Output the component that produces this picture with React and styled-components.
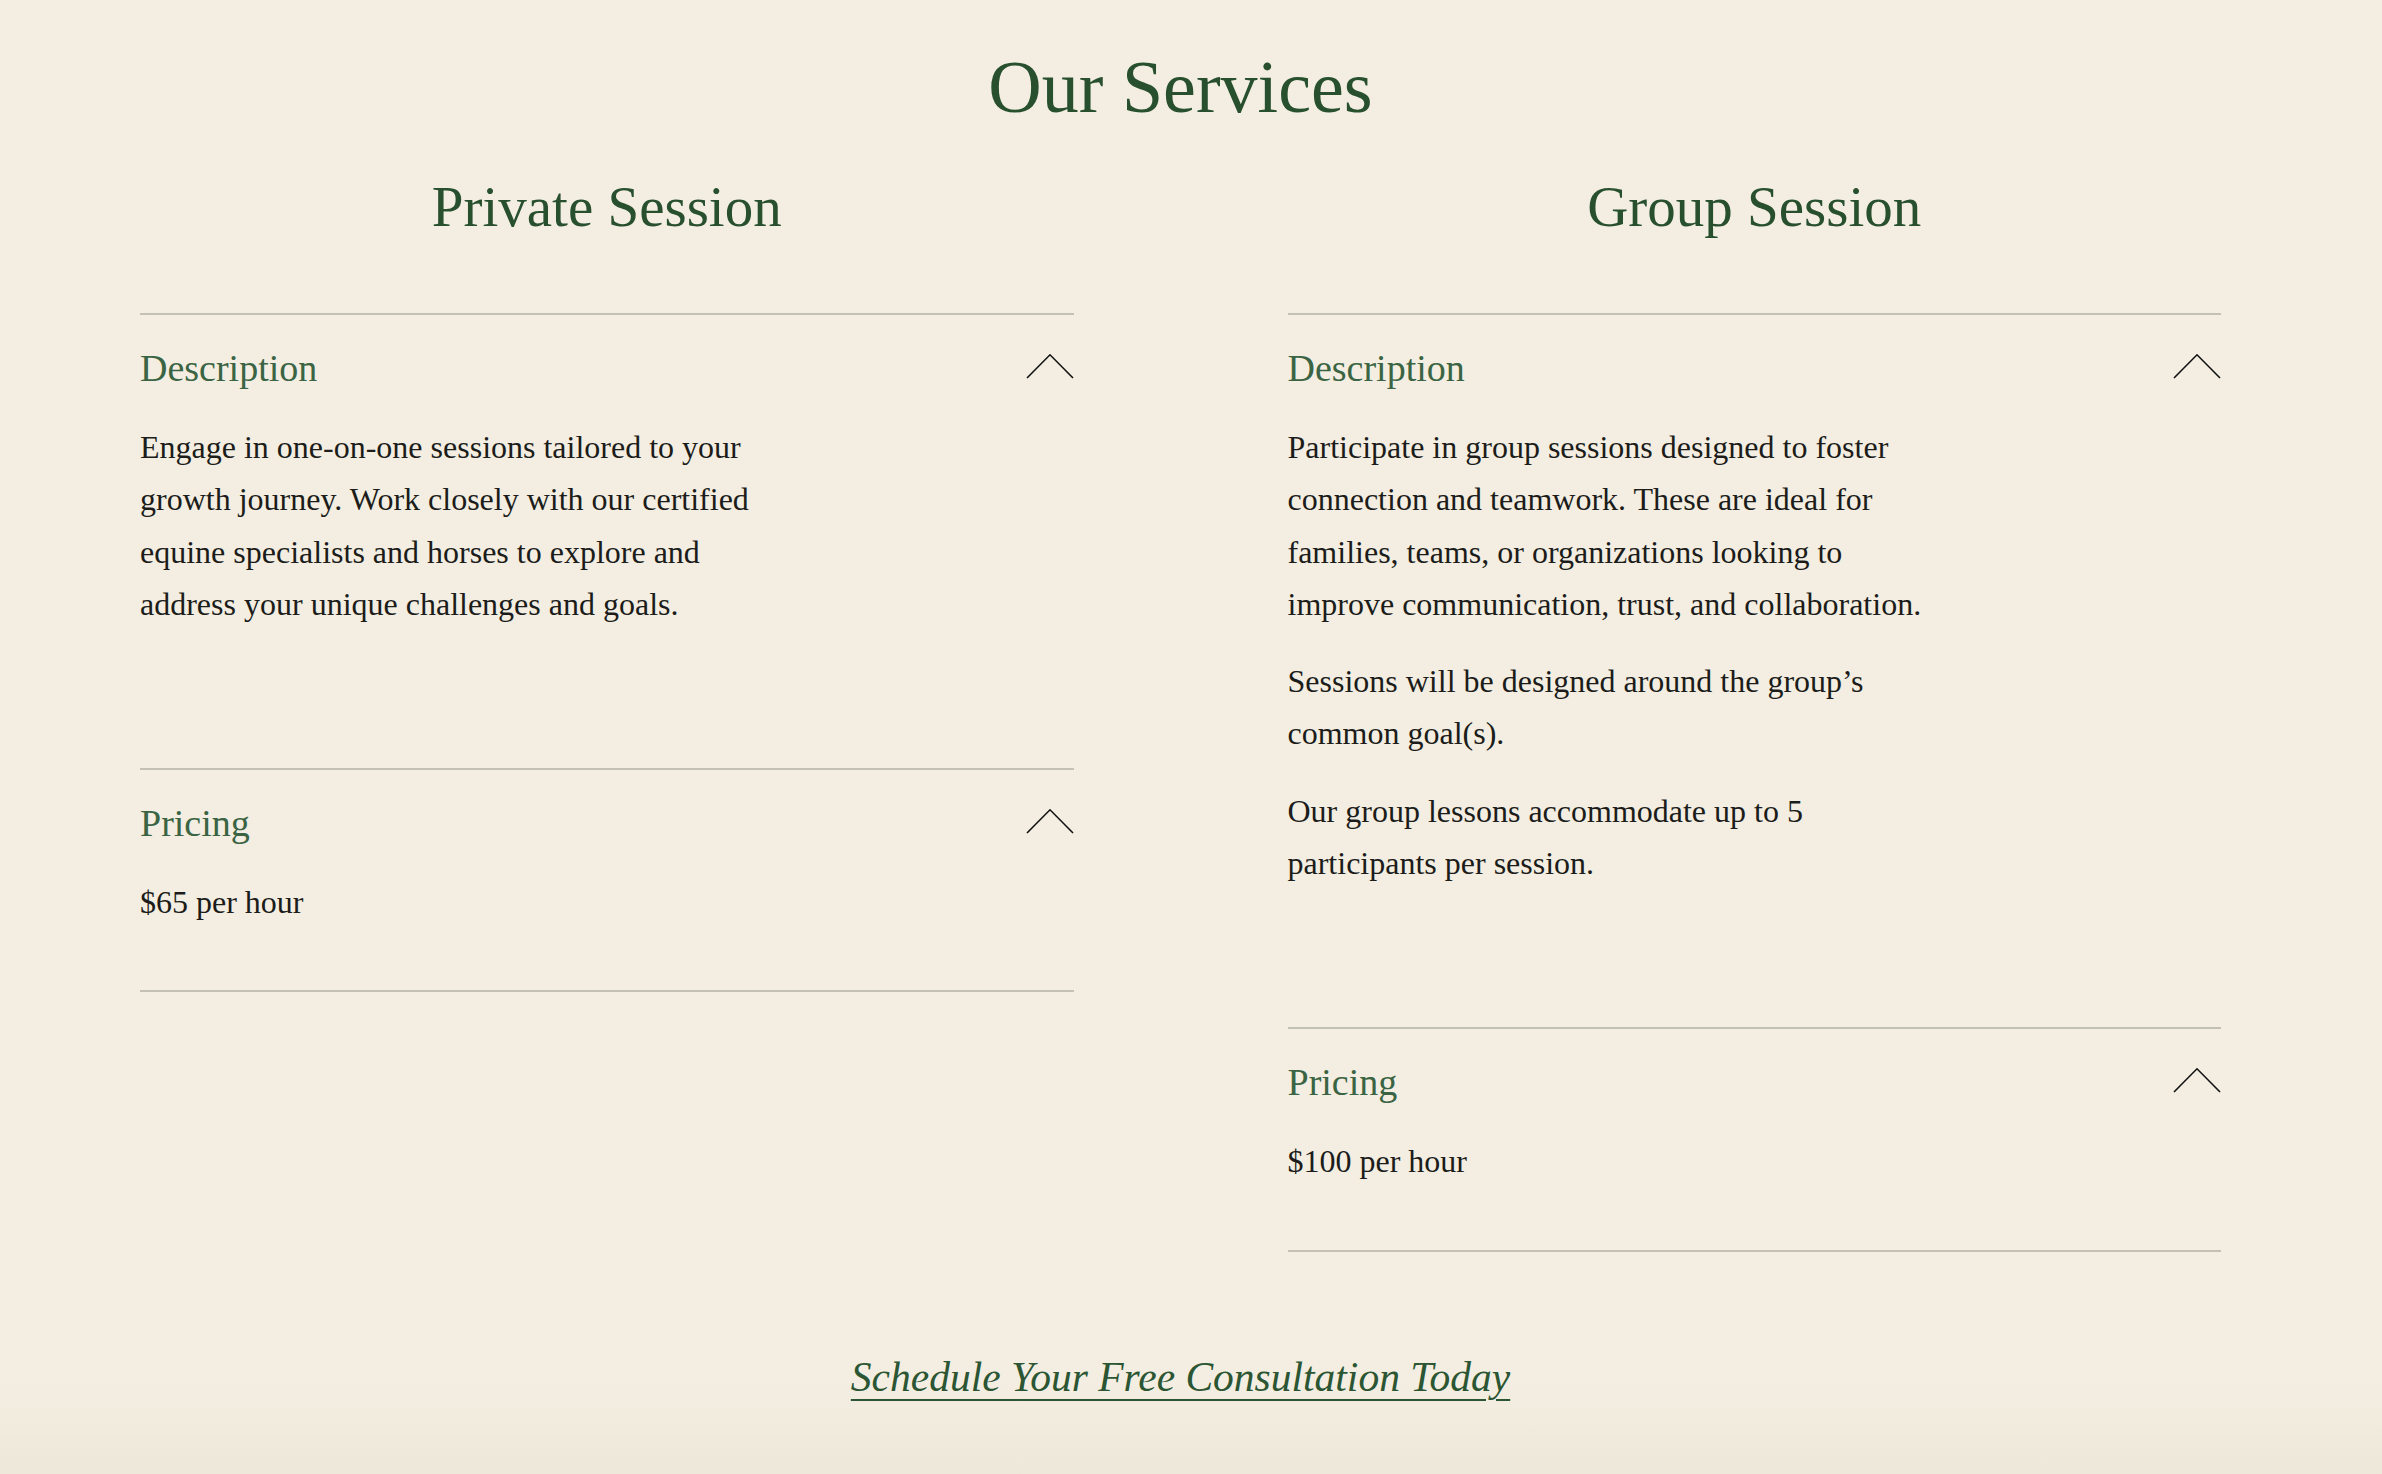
import React from "react";
import styled, { createGlobalStyle } from "styled-components";

const GlobalStyle = createGlobalStyle`
  html, body {
    margin: 0;
    padding: 0;
    background: #f3eee1;
  }
  body {
    font-family: "Liberation Serif", "Times New Roman", serif;
    color: #1c1c1a;
  }
`;

const services = [
  {
    title: "Private Session",
    description: [
      "Engage in one-on-one sessions tailored to your growth journey. Work closely with our certified equine specialists and horses to explore and address your unique challenges and goals.",
    ],
    price: "$65 per hour",
  },
  {
    title: "Group Session",
    description: [
      "Participate in group sessions designed to foster connection and teamwork. These are ideal for families, teams, or organizations looking to improve communication, trust, and collaboration.",
      "Sessions will be designed around the group\u2019s common goal(s).",
      "Our group lessons accommodate up to 5 participants per session.",
    ],
    price: "$100 per hour",
  },
];

const Chevron = () => (
  <ChevronSvg viewBox="0 0 48 26" width="48" height="26">
    <polyline
      points="1,25 24,1.8 47,25"
      fill="none"
      stroke="#111"
      strokeWidth="1.6"
    />
  </ChevronSvg>
);

const AccordionItem = ({ label, children, last, bottomPad }) => (
  <Item $last={last}>
    <ItemHeader>
      <ItemLabel>{label}</ItemLabel>
      <Chevron />
    </ItemHeader>
    <ItemBody $pad={bottomPad}>{children}</ItemBody>
  </Item>
);

const App = () => {
  return (
    <>
      <GlobalStyle />
      <Page>
        <Title>Our Services</Title>
        <Columns>
          {services.map((s) => (
            <Column key={s.title}>
              <ColumnTitle>{s.title}</ColumnTitle>
              <AccordionItem label="Description" bottomPad={138}>
                {s.description.map((p, i) => (
                  <Paragraph key={i}>{p}</Paragraph>
                ))}
              </AccordionItem>
              <AccordionItem label="Pricing" bottomPad={62} last>
                <Paragraph>{s.price}</Paragraph>
              </AccordionItem>
            </Column>
          ))}
        </Columns>
        <CtaRow>
          <CtaLink href="#">Schedule Your Free Consultation Today</CtaLink>
        </CtaRow>
      </Page>
      <BottomShade />
    </>
  );
};

export default App;

const Page = styled.main`
  min-height: 100vh;
  box-sizing: border-box;
  padding: 43px 161px 60px 140px;
  display: flex;
  flex-direction: column;
`;

const Title = styled.h1`
  margin: 0;
  font-weight: 400;
  font-size: 74px;
  line-height: 89px;
  text-align: center;
  color: #28502f;
`;

const Columns = styled.div`
  display: grid;
  grid-template-columns: 1fr 1fr;
  column-gap: 214px;
  align-items: start;
  margin-top: 41px;
`;

const Column = styled.section`
  display: flex;
  flex-direction: column;
`;

const ColumnTitle = styled.h2`
  margin: 0 0 72px;
  font-weight: 400;
  font-size: 57px;
  line-height: 68px;
  text-align: center;
  color: #28502f;
`;

const Item = styled.div`
  border-top: 2px solid #c2c1b3;
  border-bottom: ${({ $last }) => ($last ? "2px solid #c2c1b3" : "none")};
`;

const ItemHeader = styled.div`
  display: flex;
  align-items: center;
  justify-content: space-between;
  padding: 29px 0;
`;

const ItemLabel = styled.h3`
  margin: 0;
  font-weight: 400;
  font-size: 38px;
  line-height: 48px;
  color: #3a6443;
`;

const ChevronSvg = styled.svg`
  display: block;
  margin-top: -5px;
`;

const ItemBody = styled.div`
  padding-bottom: ${({ $pad }) => $pad}px;
`;

const Paragraph = styled.p`
  margin: 0 0 25px;
  max-width: 655px;
  font-size: 32px;
  line-height: 52.3px;
  color: #1c1c1a;

  &:last-child {
    margin-bottom: 0;
  }
`;

const CtaRow = styled.div`
  display: flex;
  justify-content: center;
  margin-top: 100px;
`;

const CtaLink = styled.a`
  font-style: italic;
  font-size: 41.5px;
  line-height: 50px;
  color: #2b5533;
  text-decoration: underline;
  text-decoration-thickness: 2px;
  text-underline-offset: 8px;
`;

const BottomShade = styled.div`
  position: fixed;
  left: 0;
  right: 0;
  bottom: 0;
  height: 90px;
  pointer-events: none;
  background: linear-gradient(
    to bottom,
    rgba(150, 130, 90, 0),
    rgba(150, 130, 90, 0.05)
  );
`;
